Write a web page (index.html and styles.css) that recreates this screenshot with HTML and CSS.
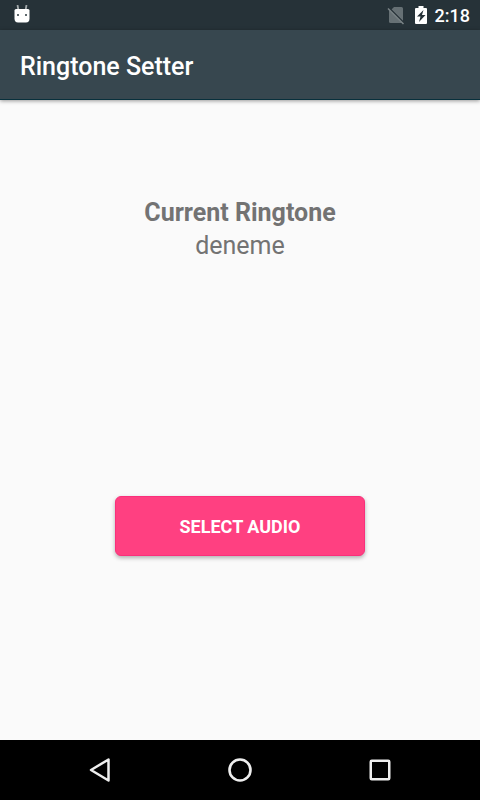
FILE: index.html
```html
<!DOCTYPE html>
<html lang="en">
<head>
<meta charset="utf-8">
<meta name="viewport" content="width=device-width, initial-scale=1">
<title>Ringtone Setter</title>
<link rel="stylesheet" href="styles.css">
</head>
<body>
<div class="status-bar">
  <svg class="icon-debug" width="16" height="20" viewBox="0 0 16 20" aria-hidden="true">
    <path d="M3.500 0 4.500 5.500M12.500 0 11.500 5.500" stroke="#a5abad" stroke-width="1.800" fill="none"/>
    <path d="M0.500 5.500Q.5 4 2 4H14Q15.500 4 15.500 5.500V13.500Q15.500 17.500 12 17.500H4Q.5 17.500 .5 13.500Z" fill="#fff"/>
    <path d="M3 9h2v2H3zM11 9h2v2h-2z" fill="#5f696d"/>
  </svg>
  <div class="status-right">
    <svg width="18" height="20" viewBox="0 0 18 20" aria-hidden="true">
      <path d="M7 2H14.500Q16 2 16 3.500V16L4.500 4.500Z" fill="#667074"/>
      <path d="M2 5V16.500Q2 18 3.500 18H15Z" fill="#667074"/>
      <path d="M2 3 17.500 18.500" stroke="#263238" stroke-width="1.500"/>
      <path d="M1 3.500 16.500 19" stroke="#7b8487" stroke-width="1.500"/>
    </svg>
    <svg class="icon-battery" width="12" height="20" viewBox="0 0 12 20" aria-hidden="true">
      <path d="M3.500 1h5v2H11q1 0 1 1v14q0 1-1 1H1q-1 0-1-1V4q0-1 1-1h2.500z" fill="#fff"/>
      <path d="M8.500 5 2 11.500H5.500L4 17 10.500 10H7Z" fill="#263238"/>
    </svg>
    <span class="clock">2:18</span>
  </div>
</div>
<header class="app-bar"><h1>Ringtone Setter</h1></header>
<main class="content">
  <section class="current">
    <h2>Current Ringtone</h2>
    <p>deneme</p>
  </section>
  <button class="select-button" type="button">SELECT AUDIO</button>
</main>
<nav class="nav-bar" aria-label="System">
  <button type="button" aria-label="Back"><svg width="24" height="26" viewBox="0 0 24 26"><path d="M20.500 2.500V23.500L3 13Z" fill="none" stroke="#eee" stroke-width="2.500" stroke-linejoin="round"/></svg></button>
  <button type="button" aria-label="Home"><svg width="26" height="26" viewBox="0 0 26 26"><circle cx="13" cy="13" r="10.500" fill="none" stroke="#eee" stroke-width="2.600"/></svg></button>
  <button type="button" aria-label="Recents"><svg width="24" height="26" viewBox="0 0 24 26"><rect x="2.750" y="3.750" width="18.500" height="18.500" rx="1" fill="none" stroke="#eee" stroke-width="2.500"/></svg></button>
</nav>
</body>
</html>
```
FILE: styles.css
```css
* { box-sizing: border-box; }

body {
  margin: 0;
  min-height: 100vh;
  display: flex;
  flex-direction: column;
  background: #fafafa;
  color: #737373;
  font-family: Roboto, sans-serif;
}

h1, h2, p { margin: 0; }
svg { display: block; }

.status-bar {
  display: flex;
  align-items: center;
  justify-content: space-between;
  height: 30px;
  padding: 0 10px 0 14px;
  background: #263238;
}

.status-right { display: flex; align-items: center; }
.icon-battery { margin: 0 8px 0 10px; }

.clock {
  padding-top: 2px;
  color: #fff;
  font-size: 18px;
  font-weight: 500;
  line-height: 28px;
}

.app-bar {
  display: flex;
  align-items: center;
  height: 70px;
  padding: 4px 20px 0;
  background: #37474f;
  border-bottom: 1px solid #08303c;
  box-shadow: 0 1px 4px rgba(0, 0, 0, 0.4);
}

.app-bar h1 {
  color: #fff;
  font-size: 25px;
  font-weight: 500;
  line-height: 32px;
}

.content {
  flex: 1;
  display: flex;
  flex-direction: column;
  align-items: center;
  justify-content: space-between;
  padding: 96px 16px 184px;
}

.current {
  text-align: center;
  font-size: 25px;
  line-height: 33px;
}

.current h2 {
  font-size: 25px;
  font-weight: 700;
}

.select-button {
  width: 250px;
  height: 60px;
  padding: 2px 0 0;
  border: 1px solid #fa2f7b;
  border-radius: 6px;
  background: #ff4081;
  box-shadow: 0 2px 4px rgba(0, 0, 0, 0.3);
  color: #fff;
  font: 700 18px/24px Roboto, sans-serif;
}

.nav-bar {
  display: flex;
  justify-content: center;
  height: 60px;
  background: #000;
}

.nav-bar button {
  display: flex;
  align-items: center;
  justify-content: center;
  width: 140px;
  padding: 0;
  border: 0;
  background: transparent;
}
```
